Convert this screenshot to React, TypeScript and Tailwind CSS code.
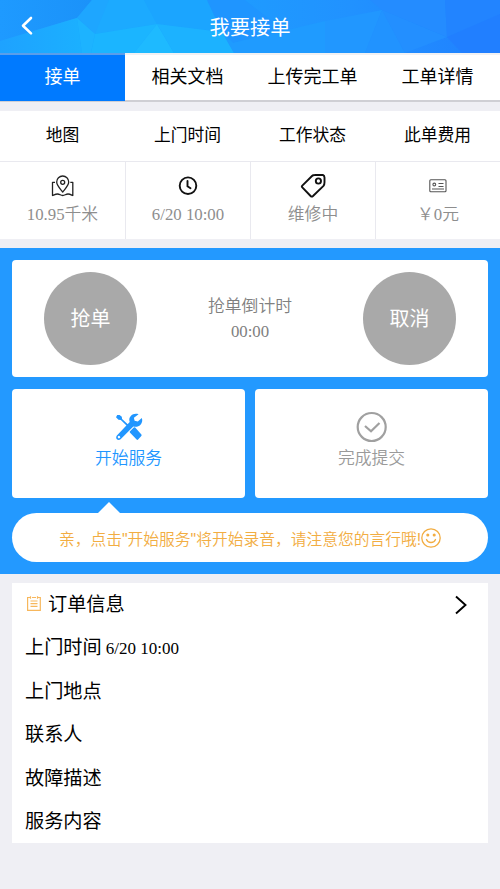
import type { ReactNode } from "react";
import clsx from "clsx";

const TABS = ["接单", "相关文档", "上传完工单", "工单详情"];
const ORDER_FIELDS = [
    { label: "上门时间", value: "6/20 10:00" },
    { label: "上门地点" },
    { label: "联系人" },
    { label: "故障描述" },
    { label: "服务内容" },
];

function HeaderPattern() {
    return (
        <svg className="absolute inset-0 h-full w-full" viewBox="0 0 500 53" preserveAspectRatio="none">
            <defs>
                <linearGradient id="sky" x1="0" x2="1">
                    <stop offset="0" stopColor="#1e9aff" />
                    <stop offset=".25" stopColor="#1ba9ff" />
                    <stop offset=".45" stopColor="#1e9cff" />
                    <stop offset=".7" stopColor="#2192ff" />
                    <stop offset="1" stopColor="#2080ff" />
                </linearGradient>
                <linearGradient id="left" x1="0" x2="1">
                    <stop offset="0" stopColor="#1e9aff" />
                    <stop offset="1" stopColor="#1b92f9" />
                </linearGradient>
                <linearGradient id="low" x1="0" x2="1">
                    <stop offset="0" stopColor="#1ea2ff" />
                    <stop offset="1" stopColor="#1bb0ff" />
                </linearGradient>
            </defs>
            <path fill="url(#sky)" d="M0 0h500v53H0z" />
            <path fill="url(#left)" d="M0 0h92L77 18 0 41z" />
            <path fill="url(#low)" d="M0 41 77 18l5 35H0z" />
            <path fill="#1ea6ff" d="M92 0h17l-9 28-5 6-18-16z" />
            <path fill="#1db3ff" d="m77 18 18 16-4 19h-9z" />
            <path fill="#1caaff" d="M109 0h35l13 24-62 10z" />
            <path fill="#1ba5ff" d="M144 0h63l15 32-65-8z" />
            <path fill="#1bb5ff" d="m95 34 62-10-23 29H91z" />
            <path fill="#1ebaff" d="m157 24 17 29h-40z" />
            <path fill="#1cb2ff" d="m157 24 65 8 12 21h-60z" />
            <path fill="#1f95ff" d="M207 0h38l38 30-50 13-11-11z" />
            <path fill="#1f9bff" d="m222 32 11 11 92-22v32h-91z" />
            <path fill="#2197ff" d="m325 21 57-11-17 43h-40z" />
            <path fill="#2193ff" d="m382 10 23 43h-40z" />
            <path fill="#238fff" d="m382 10 65 27-42 16z" />
            <path fill="#248cff" d="M370 0h75l2 37-65-27z" />
            <path fill="#2284ff" d="M445 0h55v53h-38l-15-16z" />
            <path fill="#217fff" d="m447 37 53-23v39h-38z" />
        </svg>
    );
}

function MapIcon() {
    return (
        <svg className="h-[22px] w-6" viewBox="0 0 24 22" fill="none" stroke="#222" strokeWidth="1.300" strokeLinejoin="round">
            <path d="M11.7 17C9 13.5 5.700 10.500 5.700 7a6 6 0 0 1 12 0c0 3.500-3.300 6.500-6 10Z" />
            <circle cx="11.700" cy="7.300" r="2" />
            <path d="M4 7.300H1.500v13.200c2-.8 3.300-1.500 5-1.500 2.400 0 3 1.500 5.200 1.500s3-1.500 5.300-1.500c1.600 0 3 .7 4.800 1.500V7.300h-2.500" />
        </svg>
    );
}

function ClockIcon() {
    return (
        <svg className="h-5 w-5" viewBox="0 0 20 20" fill="none" stroke="#111" strokeWidth="1.900" strokeLinecap="round">
            <circle cx="10" cy="9.700" r="8.300" />
            <path d="M9.500 5v5.200l3 2" />
        </svg>
    );
}

function TagIcon() {
    return (
        <svg className="h-6 w-[26px]" viewBox="0 0 26 24" fill="none" stroke="#111" strokeWidth="1.900" strokeLinejoin="round">
            <path d="M2.300 11.600 12 2Q13 1 14.600 1L21.800.8q2.700 0 2.700 2.700v4.800q0 2.400-1 3.600L13 22q-1.200 1.100-2.400 0L2.300 13.400q-.9-.9 0-1.800Z" />
            <circle cx="18.400" cy="7" r="2.600" />
        </svg>
    );
}

function CardIcon() {
    return (
        <svg className="h-[14px] w-[18px]" viewBox="0 0 18 14" fill="none" stroke="#555" strokeWidth="1.100">
            <rect x=".8" y=".8" width="16.200" height="12" rx="1" />
            <circle cx="5.300" cy="5.500" r="1.400" />
            <path d="M9.500 4.500h5M9.500 7.500h5M3 10h12" />
        </svg>
    );
}

function ToolsIcon() {
    return (
        <svg className="h-7 w-7" viewBox="0 0 28 28" fill="#2196ff">
            <path d="m1 4.200 1.200-2.300L4.600 2l2.200 1.700.3 2.200 7.500 7.100-1.300 1.300-7.500-7.200-2.300-.4z" />
            <path d="m15 18.200 3.800-3.800q.7-.5 1.400.2l6.200 6.800q.6.800-.1 1.500l-3.200 3.700q-.7.700-1.500 0l-6.500-6.900q-.8-.8-.1-1.500Z" />
            <path d="M23.600 1.200c-3-1-6-.3-7.800 1.700-1.600 1.800-1.900 4-1.100 6L1.900 22.600c-2.200 2.800 1 6 3.700 3.700L18.300 13.500c2.600.8 5.300.2 7.200-1.800 1.800-2 2.100-4.600 1.300-6.800l-4 3.600-3.200-.7-.7-3ZM5 23.400a1.200 1.200 0 1 1-2 1.400 1.200 1.200 0 0 1 2-1.400Z" fillRule="evenodd" />
        </svg>
    );
}

function DoneIcon() {
    return (
        <svg className="h-8 w-8" viewBox="0 0 32 32" fill="none" stroke="#a0a0a0" strokeWidth="2.200">
            <circle cx="15.700" cy="16" r="14" />
            <path d="m9 15 6 5.300L23.500 12" />
        </svg>
    );
}

function SmileIcon() {
    return (
        <svg className="h-5 w-5 shrink-0" viewBox="0 0 20 20" fill="none" stroke="#f2ad42" strokeWidth="1.300" strokeLinecap="round">
            <circle cx="10" cy="10" r="9.200" />
            <path d="M5.500 11.500c1.500 4 7.500 4 9 0" />
            <circle cx="6.800" cy="7" r=".9" fill="#f2ad42" />
            <circle cx="13.200" cy="7" r=".9" fill="#f2ad42" />
        </svg>
    );
}

function NoteIcon() {
    return (
        <svg className="h-[15px] w-[14px]" viewBox="0 0 14 15" fill="none" stroke="#f7b75c" strokeWidth="1.200">
            <path d="M3 1.500H.6v12.800h12.700V1.500H11M5 1.500h4M3.500.2v2.600M10.500.2v2.600M3.500 5h7M3.500 7.700h7M3.500 10.400h7" />
        </svg>
    );
}

function StatCell({ icon, children }: { icon: ReactNode; children: ReactNode }) {
    return (
        <div className="flex flex-col items-center border-l border-[#e9e9ef] pt-3 first:border-l-0">
            <div className="flex h-6 items-center">{icon}</div>
            <div className="mt-[5px] text-[16.8px] leading-6 font-[350] text-[#8e8e8e]">{children}</div>
        </div>
    );
}

function RoundButton({ children }: { children: ReactNode }) {
    return (
        <button className="h-[93px] w-[93px] rounded-full bg-[#a9a9a9] text-[20px] text-white">{children}</button>
    );
}

export default function App() {
    return (
        <div className="h-[889px] w-[500px] overflow-hidden bg-[#efeff4] font-['Liberation_Serif','Noto_Sans_CJK_SC',sans-serif] text-black">
            <header className="relative flex h-[53px] items-center justify-center pt-[3px]">
                <HeaderPattern />
                <svg className="absolute top-4 left-5 h-5 w-3.5" viewBox="0 0 14 20" fill="none" stroke="white" strokeWidth="2.600" strokeLinecap="round" strokeLinejoin="round">
                    <path d="M11 2 3 9.700l8 7.700" />
                </svg>
                <h1 className="relative text-[20.3px] leading-none text-white">我要接单</h1>
            </header>

            <nav className="grid h-[49px] grid-cols-4 border-b-2 border-[#cfcfd4] bg-white">
                {TABS.map((tab, i) => (
                    <button
                        key={tab}
                        className={clsx(
                            "-mb-px border-t-2 pb-[3px] text-[18px] leading-none",
                            i === 0 ? "border-[#5a9eea] bg-[#007aff] text-white" : "border-[#f1f1f3]"
                        )}
                    >
                        {tab}
                    </button>
                ))}
            </nav>

            {/* Job summary */}
            <section className="mt-[9px] bg-white">
                <div className="grid h-[51px] grid-cols-4 items-center border-b border-[#e9e9ef] pt-px text-center text-[16.8px] leading-none">
                    <span>地图</span>
                    <span>上门时间</span>
                    <span>工作状态</span>
                    <span>此单费用</span>
                </div>
                <div className="grid h-[77px] grid-cols-4">
                    <StatCell icon={<MapIcon />}>10.95千米</StatCell>
                    <StatCell icon={<ClockIcon />}>6/20 10:00</StatCell>
                    <StatCell icon={<TagIcon />}>维修中</StatCell>
                    <StatCell icon={<CardIcon />}>￥0元</StatCell>
                </div>
            </section>

            {/* Actions */}
            <section className="mt-[9px] h-[326px] bg-[#2399ff] px-3 pt-3">
                <div className="flex h-[117px] items-center justify-between rounded bg-white px-8">
                    <RoundButton>抢单</RoundButton>
                    <div className="text-center text-[16.8px] leading-[25px] font-[350] text-[#808080]">
                        <p>抢单倒计时</p>
                        <p>00:00</p>
                    </div>
                    <RoundButton>取消</RoundButton>
                </div>

                <div className="mt-3 grid h-[109px] grid-cols-2 gap-2.5 text-[16.8px] font-[350]">
                    <button className="flex flex-col items-center justify-start rounded bg-white pt-[22px] text-[#2196ff]">
                        <span className="flex h-8 items-center"><ToolsIcon /></span>
                        <span className="mt-1 leading-6">开始服务</span>
                    </button>
                    <button className="flex flex-col items-center justify-start rounded bg-white pt-[22px] text-[#9a9a9a]">
                        <DoneIcon />
                        <span className="mt-1 leading-6">完成提交</span>
                    </button>
                </div>

                <div className="relative mt-[15px] flex h-[49px] items-center justify-center rounded-full bg-white text-[15.750px] text-[#f2ad42]">
                    <svg className="absolute -top-[11px] left-[85px] h-3 w-6" viewBox="0 0 24 12" fill="white">
                        <path d="M12 0 24 12H0z" />
                    </svg>
                    <span className="pt-1 font-['Liberation_Sans','Noto_Sans_CJK_SC',sans-serif] font-[350] whitespace-nowrap">亲，点击"开始服务"将开始录音，请注意您的言行哦!</span>
                    <SmileIcon />
                </div>
            </section>

            {/* Order info */}
            <section className="mx-3 mt-[9px] h-[260px] bg-white px-[13px] text-[19.2px] leading-[43.400px]">
                <div className="flex h-[43.400px] items-center">
                    <span className="mr-[7px] mb-[3px] ml-0.5"><NoteIcon /></span>
                    <h2>订单信息</h2>
                    <svg className="mr-2 ml-auto h-5 w-3" viewBox="0 0 12 20" fill="none" stroke="black" strokeWidth="1.900">
                        <path d="m1 1.500 9.500 8.500L1 18.500" />
                    </svg>
                </div>
                {ORDER_FIELDS.map(({ label, value }) => (
                    <div key={label} className="h-[43.400px]">
                        {label}
                        {value && <span className="ml-1 text-[17px]">{value}</span>}
                    </div>
                ))}
            </section>
        </div>
    );
}
